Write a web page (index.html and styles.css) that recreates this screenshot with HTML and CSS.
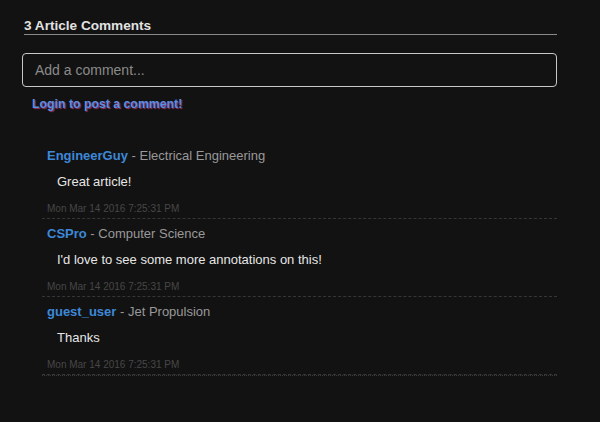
FILE: index.html
```html
<!DOCTYPE html>
<html>
<head>
<meta charset="utf-8">
<link rel="stylesheet" href="styles.css">
</head>
<body>
<div class="comments">
  <h3 class="title">3 Article Comments</h3>
  <div class="input">Add a comment...</div>
  <a class="login">Login to post a comment!</a>
  <ul class="list">
    <li class="comment">
      <div class="meta"><span class="user">EngineerGuy</span> - Electrical Engineering</div>
      <div class="body">Great article!</div>
      <div class="time">Mon Mar 14 2016 7:25:31 PM</div>
    </li>
    <li class="comment">
      <div class="meta"><span class="user">CSPro</span> - Computer Science</div>
      <div class="body">I'd love to see some more annotations on this!</div>
      <div class="time">Mon Mar 14 2016 7:25:31 PM</div>
    </li>
    <li class="comment">
      <div class="meta"><span class="user">guest_user</span> - Jet Propulsion</div>
      <div class="body">Thanks</div>
      <div class="time">Mon Mar 14 2016 7:25:31 PM</div>
    </li>
  </ul>
</div>
</body>
</html>
```
FILE: styles.css
```css
html, body {
  margin: 0;
  padding: 0;
  background: #121212;
  height: 100%;
}
body {
  font-family: "Liberation Sans", Arial, sans-serif;
  color: #ddd;
}
.comments {
  margin-left: 22px;
  width: 535px;
  padding-top: 18px;
}
.title {
  margin: 0 0 0 2px;
  font-size: 13.6px;
  line-height: 16px;
  font-weight: bold;
  color: #e2e2e2;
  border-bottom: 1px solid #8a8a8a;
}
.input {
  margin-top: 18px;
  height: 32px;
  box-sizing: content-box;
  border: 1px solid #c8c8c8;
  border-radius: 4px;
  padding: 0 12px;
  font-size: 14px;
  line-height: 32px;
  color: #8a8a8a;
}
.login {
  display: block;
  margin: 9px 0 0 10px;
  font-size: 12.3px;
  line-height: 16px;
  font-weight: bold;
  color: #5b8fe2;
  text-shadow: 1px 1px 1px rgba(190, 60, 120, 0.8);
}
.list {
  list-style: none;
  margin: 29px 0 0 20px;
  padding: 0;
  border-bottom: 1px dotted #3a3a3a;
}
.comment {
  padding: 6px 0 3px 5px;
  border-bottom: 1px dashed #363636;
}
.meta {
  font-size: 13px;
  line-height: 18px;
  color: #999;
}
.user {
  font-weight: bold;
  color: #3d88d8;
}
.body {
  margin-top: 8px;
  padding-left: 10px;
  font-size: 13px;
  line-height: 18px;
  color: #e6e6e6;
}
.time {
  margin-top: 12px;
  font-size: 10px;
  line-height: 12px;
  color: #474747;
}
```
